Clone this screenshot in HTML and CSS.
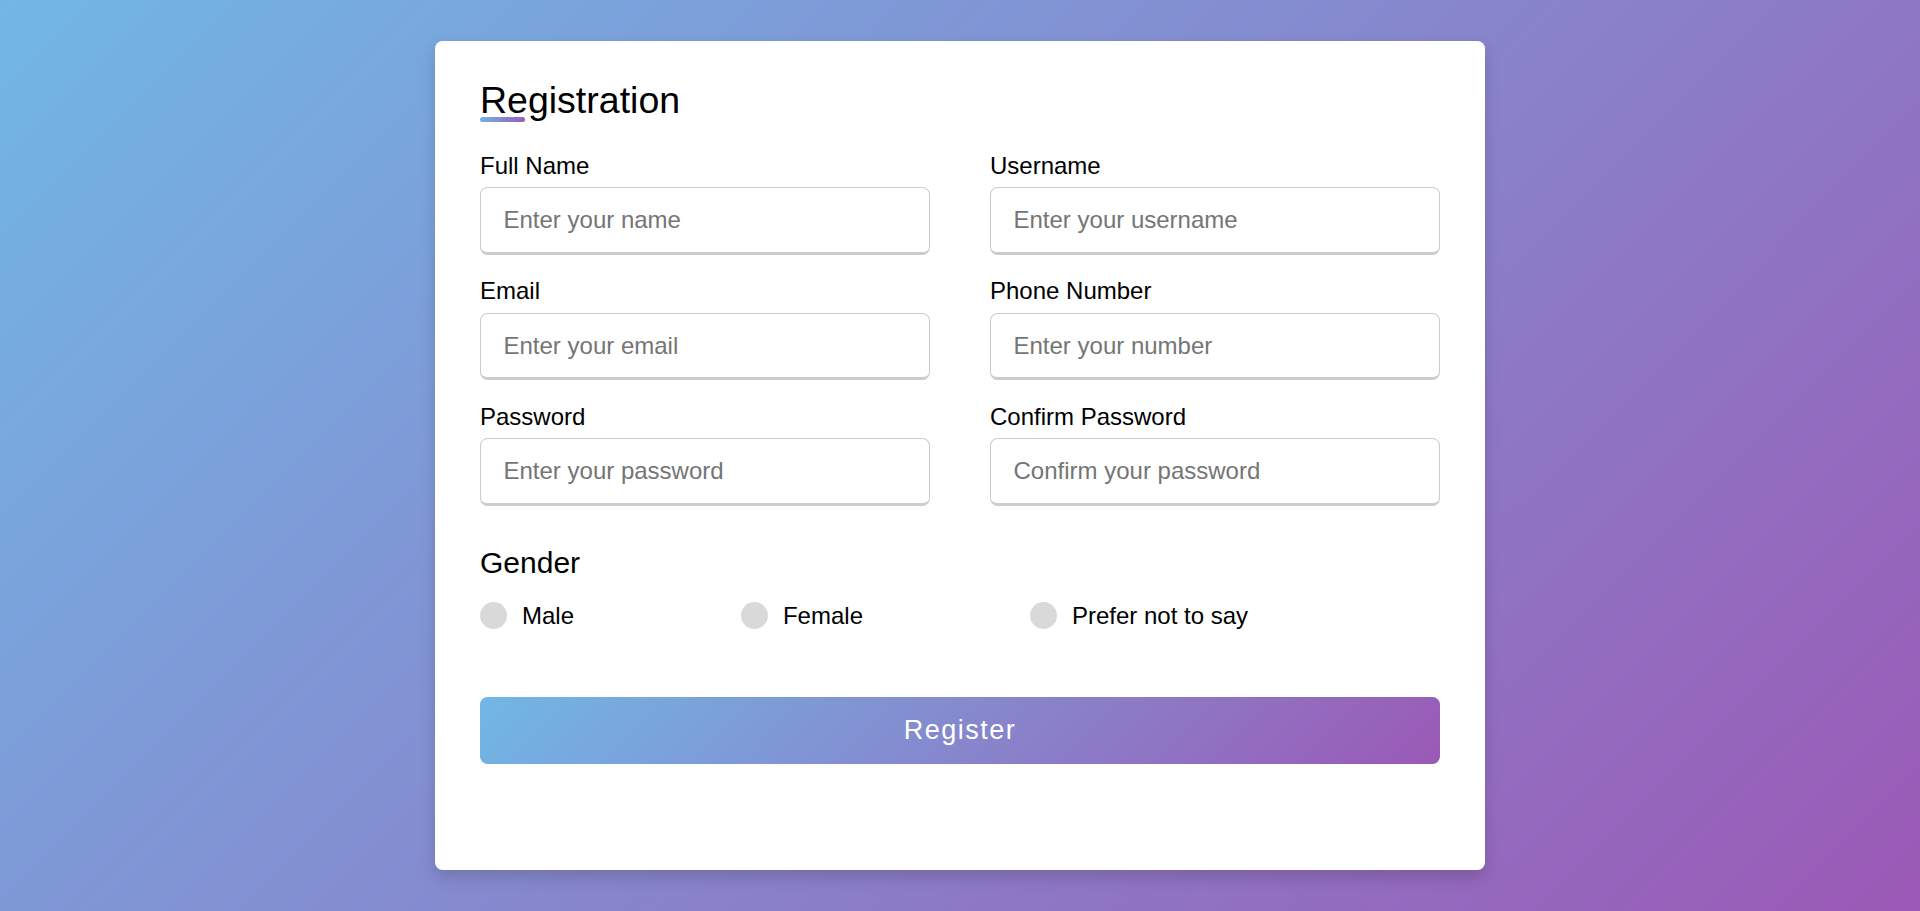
FILE: index.html
```html
<!DOCTYPE html>
<html lang="en">
<head>
<meta charset="UTF-8">
<title>Registration</title>
<link rel="stylesheet" href="styles.css">
</head>
<body>
<div class="container">
  <div class="title">Registration</div>
  <form class="form">
    <div class="user-details">
      <div class="input-box">
        <span class="details">Full Name</span>
        <input type="text" placeholder="Enter your name">
      </div>
      <div class="input-box">
        <span class="details">Username</span>
        <input type="text" placeholder="Enter your username">
      </div>
      <div class="input-box">
        <span class="details">Email</span>
        <input type="text" placeholder="Enter your email">
      </div>
      <div class="input-box">
        <span class="details">Phone Number</span>
        <input type="text" placeholder="Enter your number">
      </div>
      <div class="input-box">
        <span class="details">Password</span>
        <input type="text" placeholder="Enter your password">
      </div>
      <div class="input-box">
        <span class="details">Confirm Password</span>
        <input type="text" placeholder="Confirm your password">
      </div>
    </div>
    <div class="gender-details">
      <div class="gender-title">Gender</div>
      <div class="category">
        <label class="option"><span class="dot"></span><span class="gender">Male</span></label>
        <label class="option"><span class="dot"></span><span class="gender">Female</span></label>
        <label class="option"><span class="dot"></span><span class="gender">Prefer not to say</span></label>
      </div>
    </div>
    <div class="button">
      <input type="button" value="Register">
    </div>
  </form>
</div>
</body>
</html>
```
FILE: styles.css
```css
* {
  margin: 0;
  padding: 0;
  box-sizing: border-box;
}
html, body {
  height: 100%;
}
body {
  font-family: "Liberation Sans", Arial, sans-serif;
  display: flex;
  align-items: center;
  justify-content: center;
  padding: 15px;
  background: linear-gradient(135deg, #71b7e6, #9b59b6);
  color: #000;
}
.container {
  width: 1050px;
  background: #fff;
  padding: 37.5px 45px;
  border-radius: 7.5px;
  box-shadow: 0 7.5px 15px rgba(0, 0, 0, 0.15);
}
.title {
  position: relative;
  font-size: 37.5px;
  line-height: 43px;
}
.title::before {
  content: "";
  position: absolute;
  left: 0;
  bottom: 0;
  height: 4.5px;
  width: 45px;
  border-radius: 7.5px;
  background: linear-gradient(135deg, #71b7e6, #9b59b6);
}
.user-details {
  display: flex;
  flex-wrap: wrap;
  justify-content: space-between;
  margin: 30px 0 18px;
}
.input-box {
  width: calc(50% - 30px);
  margin-bottom: 22.5px;
}
.details {
  display: block;
  font-size: 24px;
  line-height: 28px;
  margin-bottom: 7.5px;
}
.input-box input {
  display: block;
  width: 100%;
  height: 67.5px;
  font-family: "Liberation Sans", Arial, sans-serif;
  font-size: 24px;
  color: #333;
  border-radius: 7.5px;
  padding-left: 22.5px;
  border: 1.5px solid #ccc;
  border-bottom-width: 3px;
  outline: none;
  background: #fff;
}
.input-box input::placeholder {
  color: #757575;
}
.gender-title {
  font-size: 30px;
  line-height: 34.5px;
}
.category {
  display: flex;
  width: 80%;
  margin: 21px 0;
  justify-content: space-between;
}
.option {
  display: flex;
  align-items: center;
  font-size: 24px;
  line-height: 27.5px;
}
.dot {
  width: 27px;
  height: 27px;
  border-radius: 50%;
  background: #d9d9d9;
  margin-right: 15px;
}
.button {
  height: 67.5px;
  margin: 67.5px 0 68px;
}
.button input {
  width: 100%;
  height: 100%;
  border: none;
  border-radius: 7.5px;
  color: #fff;
  font-family: "Liberation Sans", Arial, sans-serif;
  font-size: 27px;
  letter-spacing: 1.5px;
  background: linear-gradient(135deg, #71b7e6, #9b59b6);
}
```
